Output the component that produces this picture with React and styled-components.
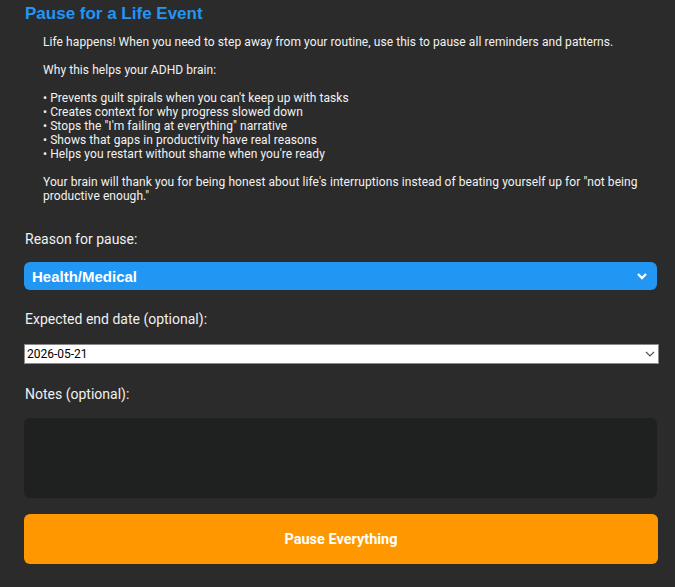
import styled, { createGlobalStyle } from 'styled-components';

const GlobalStyle = createGlobalStyle`
    body {
        margin: 0;
        background: #2b2b2b;
        font-family: Roboto, "Liberation Sans", sans-serif;
        color: #ffffff;
    }
`

const Page = styled.div`
    padding: 4px 17px 0 24px;
    display: flex;
    flex-direction: column;
`

const Title = styled.h2`
    margin: 0;
    font-family: "Liberation Sans", Arial, sans-serif;
    font-size: 17px;
    font-weight: bold;
    color: #2196f3;
    line-height: 20px;
    padding-left: 1px;
`

const Intro = styled.p`
    margin: 11px 0 0 0;
    padding: 0 8px 0 19px;
    font-size: 12px;
    line-height: 14px;
    letter-spacing: 0.07px;
    white-space: pre-wrap;
    color: #f2f2f2;
`

const Label = styled.label`
    display: block;
    font-size: 14px;
    line-height: 18px;
    color: #f0f0f0;
    margin-top: ${props => props.$top}px;
    padding-left: 1px;
`

const SelectBox = styled.div`
    margin-top: 14px;
    height: 28px;
    background: #2196f3;
    border-radius: 6px;
    display: flex;
    align-items: center;
    justify-content: space-between;
    padding: 0 9px 0 8px;
    width: 633px;
    box-sizing: border-box;
    font-family: "Liberation Sans", Arial, sans-serif;
    font-size: 15px;
    font-weight: bold;
`

const DateBox = styled.div`
    margin-top: 16px;
    height: 20px;
    width: 635px;
    box-sizing: border-box;
    background: #ffffff;
    border: 1px solid #8a8a8a;
    display: flex;
    align-items: center;
    justify-content: space-between;
    padding: 0 2px;
    color: #000000;
    font-size: 12px;
`

const NotesBox = styled.div`
    margin-top: 15px;
    height: 80px;
    width: 633px;
    background: #1f2020;
    border-radius: 6px;
`

const PauseButton = styled.button`
    margin-top: 16px;
    height: 50px;
    width: 634px;
    border: none;
    border-radius: 6px;
    background: #ff9800;
    color: #ffffff;
    font-family: Roboto, "Liberation Sans", sans-serif;
    font-size: 14.5px;
    font-weight: bold;
    cursor: pointer;
`

const introText = `Life happens! When you need to step away from your routine, use this to pause all reminders and patterns.

Why this helps your ADHD brain:

• Prevents guilt spirals when you can't keep up with tasks
• Creates context for why progress slowed down
• Stops the "I'm failing at everything" narrative
• Shows that gaps in productivity have real reasons
• Helps you restart without shame when you're ready

Your brain will thank you for being honest about life's interruptions instead of beating yourself up for "not being productive enough."`

function Chevron({ color, width }) {
    return (
        <svg width="12" height="8" viewBox="0 0 12 8">
            <path d="M2 2 L6 6 L10 2" fill="none" stroke={color} strokeWidth={width} />
        </svg>
    );
}

function App() {
    return (
        <>
            <GlobalStyle />
            <Page>
                <Title>Pause for a Life Event</Title>
                <Intro>{introText}</Intro>
                <Label $top={27}>Reason for pause:</Label>
                <SelectBox>
                    <span>Health/Medical</span>
                    <Chevron color="#ffffff" width={2.4} />
                </SelectBox>
                <Label $top={20}>Expected end date (optional):</Label>
                <DateBox>
                    <span>2026-05-21</span>
                    <Chevron color="#555555" width={1.2} />
                </DateBox>
                <Label $top={21}>Notes (optional):</Label>
                <NotesBox />
                <PauseButton>Pause Everything</PauseButton>
            </Page>
        </>
    );
}

export default App;
